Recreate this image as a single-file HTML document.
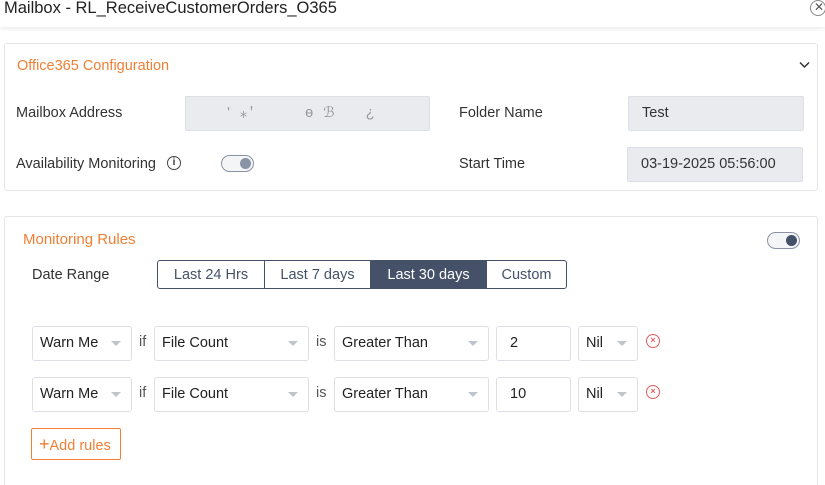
<!DOCTYPE html>
<html><head><meta charset="utf-8"><style>
*{box-sizing:border-box;margin:0;padding:0}
html,body{width:825px;height:485px;overflow:hidden}
body{background:#fff;font-family:"Liberation Sans",sans-serif;color:#333;position:relative;font-size:14.5px}
.a{position:absolute}
.hdr{left:0;top:0;width:825px;height:27px;background:#fff;box-shadow:0 2px 4px rgba(0,0,0,.08)}
.card{border:1px solid #e6e6ea;border-radius:3px;background:#fff}
.inp{border:1px solid #dcdfe6;background:#e9ebef;border-radius:2px;padding-left:13px;line-height:33px;color:#333}
.sel{border:1px solid #dcdfe6;border-radius:3px;background:#fff;padding-left:7px;line-height:33px;color:#222}
.dd:after{content:"";position:absolute;right:10px;top:14px;border:5px solid transparent;border-top:5px solid #c0c4cc;border-bottom:0}
.lbl{color:#333}
.or{color:#f07f35}
.tog{width:33px;height:17px;border:1.5px solid #8a93a6;border-radius:9px;background:#f4f5f7}
.tog i{position:absolute;right:2px;top:1.5px;width:11px;height:11px;border-radius:50%}
.seg{border:1px solid #445169;display:flex;border-radius:3px;overflow:hidden}
.seg div{border-right:1px solid #445169;text-align:center;line-height:28px;color:#445169}
.seg div:last-child{border-right:0}
.xc{width:14px;height:14px;border:1.3px solid #e05d5d;border-radius:50%;color:#e05d5d;font-size:9px;line-height:11px;text-align:center;font-weight:bold}
</style></head><body>
<div class="a hdr"></div>
<div class="a" style="left:4px;top:-1px;font-size:16.5px;color:#222">Mailbox - RL_ReceiveCustomerOrders_O365</div>
<div class="a" style="left:810px;top:0px;width:16px;height:16px;border:1px solid #888;border-radius:50%;color:#555;font-size:12px;line-height:13px;padding-left:3px">✕</div>

<div class="a card" style="left:4px;top:43px;width:814px;height:148px"></div>
<div class="a or" style="left:17px;top:58px">Office365 Configuration</div>
<svg class="a" style="left:799px;top:61px" width="11" height="8"><path d="M1 1.5 L5.5 6 L10 1.5" stroke="#333" stroke-width="1.5" fill="none"/></svg>
<div class="a lbl" style="left:16px;top:105px">Mailbox Address</div>
<div class="a inp" style="left:185px;top:96px;width:245px;height:35px;color:#999;letter-spacing:3px">&nbsp;&nbsp;&nbsp; ' ⁎ꞌ &nbsp;&nbsp;&nbsp;&nbsp;&nbsp; ɵ ℬ &nbsp;&nbsp; ¿</div>
<div class="a lbl" style="left:459px;top:105px">Folder Name</div>
<div class="a inp" style="left:628px;top:96px;width:176px;height:35px">Test</div>
<div class="a lbl" style="left:16px;top:156px">Availability Monitoring</div>
<div class="a" style="left:167px;top:156px;width:14px;height:14px;border:1.2px solid #444;border-radius:50%;font-size:10px;line-height:12px;text-align:center;font-weight:bold">i</div>
<div class="a tog" style="left:221px;top:155px"><i style="background:#8a93a6"></i></div>
<div class="a lbl" style="left:459px;top:156px">Start Time</div>
<div class="a inp" style="left:627px;top:147px;width:176px;height:35px">03-19-2025 05:56:00</div>

<div class="a card" style="left:4px;top:216px;width:814px;height:269px;border-bottom:0;border-radius:3px 3px 0 0"></div>
<div class="a or" style="left:23px;top:231px;font-size:15px">Monitoring Rules</div>
<div class="a tog" style="left:767px;top:232px"><i style="background:#445169"></i></div>
<div class="a lbl" style="left:32px;top:267px">Date Range</div>
<div class="a seg" style="left:157px;top:260px;width:410px;height:29px">
<div style="width:107px">Last 24 Hrs</div><div style="width:106px">Last 7 days</div><div style="width:116px;background:#445169;color:#fff">Last 30 days</div><div style="flex:1">Custom</div></div>

<div class="a sel dd" style="left:32px;top:326px;width:100px;height:35px">Warn Me</div>
<div class="a" style="left:139px;top:334px;color:#555">if</div>
<div class="a sel dd" style="left:154px;top:326px;width:155px;height:35px">File Count</div>
<div class="a" style="left:316px;top:334px;color:#555">is</div>
<div class="a sel dd" style="left:334px;top:326px;width:155px;height:35px">Greater Than</div>
<div class="a sel" style="left:496px;top:326px;width:75px;height:35px;padding-left:13px">2</div>
<div class="a sel dd" style="left:578px;top:326px;width:60px;height:35px">Nil</div>
<div class="a xc" style="left:646px;top:334px">×</div>

<div class="a sel dd" style="left:32px;top:377px;width:100px;height:35px">Warn Me</div>
<div class="a" style="left:139px;top:385px;color:#555">if</div>
<div class="a sel dd" style="left:154px;top:377px;width:155px;height:35px">File Count</div>
<div class="a" style="left:316px;top:385px;color:#555">is</div>
<div class="a sel dd" style="left:334px;top:377px;width:155px;height:35px">Greater Than</div>
<div class="a sel" style="left:496px;top:377px;width:75px;height:35px;padding-left:13px">10</div>
<div class="a sel dd" style="left:578px;top:377px;width:60px;height:35px">Nil</div>
<div class="a xc" style="left:646px;top:385px">×</div>

<div class="a or" style="left:31px;top:428px;width:90px;height:32px;border:1px solid #f07f35;border-radius:2px;line-height:31px;padding-left:7px"><b style="font-size:18px;font-weight:normal">+</b>Add rules</div>
</body></html>
